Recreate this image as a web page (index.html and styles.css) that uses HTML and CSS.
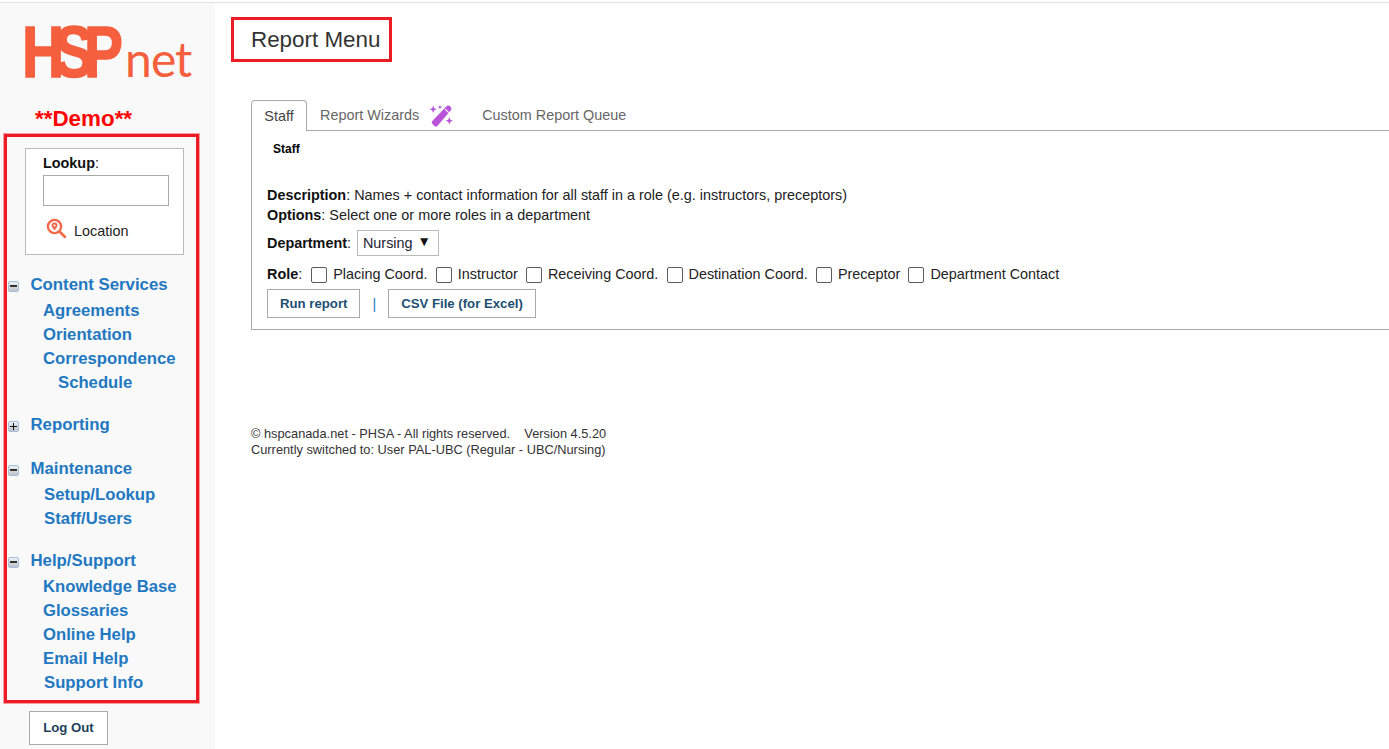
FILE: index.html
```html
<!DOCTYPE html>
<html lang="en">
<head>
<meta charset="utf-8">
<title>Report Menu</title>
<link rel="stylesheet" href="styles.css">
</head>
<body>
<div class="topline"></div>
<div class="layout">
  <aside class="sidebar">
    <div class="logo"><span class="logo-hsp">HSP</span><span class="logo-net">net</span></div>
    <div class="demo">**Demo**</div>
    <div class="navbox">
      <div class="lookup">
        <label class="lookup-label"><b>Lookup</b>:</label>
        <input class="lookup-input" type="text">
        <div class="lookup-loc">
          <svg class="loc-icon" viewBox="0 0 20 20" width="20" height="20"><circle cx="8.5" cy="8.5" r="6.6" fill="none" stroke="#f4694a" stroke-width="2.4"/><path d="M8.5 4.6a3 3 0 0 1 3 3c0 2-3 4.6-3 4.6s-3-2.600-3-4.600a3 3 0 0 1 3-3z" fill="#f4694a"/><circle cx="8.500" cy="7.500" r="1.100" fill="#fff"/><path d="M13.500 13.500 19 19" stroke="#f4694a" stroke-width="2.800" stroke-linecap="round"/></svg>
          <span>Location</span>
        </div>
      </div>
      <nav class="nav">
        <section class="group">
          <div class="head"><span class="tog minus"></span><a>Content Services</a></div>
          <a class="item">Agreements</a>
          <a class="item">Orientation</a>
          <a class="item">Correspondence</a>
          <a class="item sub">Schedule</a>
        </section>
        <section class="group closed">
          <div class="head"><span class="tog plus"></span><a>Reporting</a></div>
        </section>
        <section class="group">
          <div class="head"><span class="tog minus"></span><a>Maintenance</a></div>
          <a class="item alt">Setup/Lookup</a>
          <a class="item alt">Staff/Users</a>
        </section>
        <section class="group">
          <div class="head"><span class="tog minus"></span><a>Help/Support</a></div>
          <a class="item">Knowledge Base</a>
          <a class="item">Glossaries</a>
          <a class="item">Online Help</a>
          <a class="item">Email Help</a>
          <a class="item alt">Support Info</a>
        </section>
      </nav>
    </div>
    <button class="logout">Log Out</button>
  </aside>
  <main class="main">
    <h1 class="title">Report Menu</h1>
    <div class="content">
      <div class="tabs">
        <a class="tab active">Staff</a>
        <a class="tab wizards">Report Wizards
          <svg class="wand" viewBox="0 0 24 24" width="25" height="25"><path d="M16.800 3.200a2.400 2.400 0 0 1 3.400 0l.6.6a2.400 2.400 0 0 1 0 3.400L8 22a2 2 0 0 1-2.800 0l-2-2a2 2 0 0 1 0-2.800z" fill="#b953da"/><path d="M15.500 5.800l3.400 3.400" stroke="#fff" stroke-width="1.100"/><path d="M4 2.500l1 2.500 2.500 1-2.500 1-1 2.500-1-2.500-2.500-1 2.500-1zM10.500 2l.6 1.400 1.400.6-1.400.6-.6 1.400-.6-1.400-1.400-.6 1.400-.6zM19.500 13.500l1 2.500 2.500 1-2.500 1-1 2.500-1-2.500-2.500-1 2.500-1z" fill="#b953da"/></svg>
        </a>
        <a class="tab queue">Custom Report Queue</a>
      </div>
      <div class="panel">
        <div class="panel-title">Staff</div>
        <div class="desc"><b>Description</b>: Names + contact information for all staff in a role (e.g. instructors, preceptors)</div>
        <div class="desc"><b>Options</b>: Select one or more roles in a department</div>
        <div class="dept">
          <b>Department</b><span>:</span>
          <span class="select-wrap"><select class="select"><option>Nursing</option></select></span>
        </div>
        <div class="roles">
          <span class="role-label"><b>Role</b>:</span>
          <label class="role"><input type="checkbox">Placing Coord.</label>
          <label class="role"><input type="checkbox">Instructor</label>
          <label class="role"><input type="checkbox">Receiving Coord.</label>
          <label class="role"><input type="checkbox">Destination Coord.</label>
          <label class="role"><input type="checkbox">Preceptor</label>
          <label class="role"><input type="checkbox">Department Contact</label>
        </div>
        <div class="actions">
          <button class="btn">Run report</button>
          <span class="pipe">|</span>
          <button class="btn">CSV File (for Excel)</button>
        </div>
      </div>
      <footer class="footer">
        <div>© hspcanada.net - PHSA - All rights reserved. &nbsp;&nbsp; Version 4.5.20</div>
        <div>Currently switched to: User PAL-UBC (Regular - UBC/Nursing)</div>
      </footer>
    </div>
  </main>
</div>
</body>
</html>
```
FILE: styles.css
```css
* { box-sizing: border-box; }
html, body { margin: 0; height: 100%; }
body {
  font-family: "Liberation Sans", Arial, sans-serif;
  font-size: 14.400px;
  color: #222;
  background: #fff;
  overflow: hidden;
}
.topline { height: 3px; border-bottom: 1px solid #e2e2e2; }
.layout { display: flex; height: 746px; }

.sidebar {
  width: 215px;
  flex: none;
  background: #f9f9f9;
  padding-left: 4px;
}
.logo {
  height: 91px;
  display: flex;
  align-items: baseline;
  padding: 10px 0 0 18px;
  white-space: nowrap;
  color: #f55f3e;
}
.logo-hsp {
  font-size: 73px;
  line-height: 78px;
  font-weight: 700;
  letter-spacing: -12px;
  transform: scaleX(.8);
  transform-origin: left center;
  -webkit-text-stroke: 1.500px #f55f3e;
}
.logo-net {
  font-family: "Lato", sans-serif;
  font-weight: 400;
  font-size: 48px;
  line-height: 78px;
  letter-spacing: -1px;
  margin-left: -11px;
}
.demo {
  color: #f00;
  font-weight: 700;
  font-size: 22.400px;
  line-height: 26px;
  padding-left: 31px;
  margin-top: 12px;
}
.navbox {
  width: 195px;
  height: 569px;
  margin-top: 2px;
  border: 3px solid #ed1c24;
  box-shadow: 0 0 0 1px rgba(237, 28, 36, .4);
  padding: 11px 12px 0 0;
  overflow: hidden;
}
.lookup {
  margin-left: 18px;
  height: 107px;
  background: #fff;
  border: 1px solid #bbb;
  padding: 6px 14px 0 17px;
}
.lookup-label { display: block; line-height: 16px; color: #111; }
.lookup-input {
  display: block;
  width: 126px;
  height: 31px;
  margin-top: 4px;
  border: 1px solid #aaa;
  background: #fff;
}
.lookup-loc {
  display: flex;
  align-items: center;
  margin: 17px 0 0 3px;
  color: #222;
}
.loc-icon { margin-right: 8px; margin-top: -6px; }

.nav { margin-top: 18px; }
.group { margin-bottom: 18px; color: #1f78c1; }
.group.closed { margin-bottom: 20px; }
.head {
  display: flex;
  align-items: center;
  height: 24px;
  font-size: 16.800px;
  font-weight: 700;
  margin-bottom: 2px;
}
.group.closed .head { margin-bottom: 0; }
.tog {
  position: relative;
  width: 11px;
  height: 11px;
  margin: 2px 11.500px 0 1px;
  flex: none;
  border: 1px solid #a4c0dc;
  border-radius: 2px;
  background: linear-gradient(#eef0f2, #bfc4c9);
}
.tog::before {
  content: "";
  position: absolute;
  left: 1px; right: 1px; top: 3px;
  height: 2px;
  background: #333;
}
.tog.plus::before { left: 1px; right: 1px; top: 4px; height: 1px; background: #111; }
.tog.plus::after {
  content: "";
  position: absolute;
  top: 1px; bottom: 1px; left: 4px;
  width: 1px;
  background: #111;
}
.item {
  display: block;
  height: 24px;
  line-height: 24px;
  font-size: 16.700px;
  font-weight: 700;
  padding-left: 36px;
}
.item.alt { padding-left: 37px; }
.item.sub { padding-left: 51px; }

.logout {
  display: block;
  width: 79px;
  height: 34px;
  margin: 8px 0 0 25px;
  background: #fff;
  border: 1px solid #aaa;
  font: 700 13.200px "Liberation Sans", Arial, sans-serif;
  color: #1d3f5c;
  padding: 0 0 2px;
}

.main { flex: 1; min-width: 0; padding: 14px 0 0 16px; }
.title {
  display: inline-block;
  margin: 0;
  width: 161px;
  height: 45px;
  border: 3px solid #ed1c24;
  padding-left: 17px;
  font-size: 22.400px;
  font-weight: 400;
  line-height: 39px;
  color: #333;
}
.content { padding: 38px 0 0 20px; }
.tabs {
  display: flex;
  height: 31px;
  position: relative;
  z-index: 1;
}
.tab {
  display: flex;
  align-items: center;
  height: 30px;
  color: #666;
  white-space: nowrap;
}
.tab.active {
  width: 56px;
  height: 31px;
  justify-content: center;
  color: #444;
  background: #fff;
  border: 1px solid #aaa;
  border-bottom: 0;
  border-radius: 4px 4px 0 0;
}
.wizards { margin-left: 13px; }
.wand { margin-left: 10px; }
.queue { margin-left: 28px; }

.panel {
  margin-top: -1px;
  height: 200px;
  border: 1px solid #aaa;
  border-right: 0;
  padding-left: 15px;
  color: #222;
}
.panel-title {
  font-size: 12px;
  font-weight: 700;
  line-height: 16px;
  color: #000;
  padding: 10px 0 0 6px;
  height: 54px;
}
.desc { line-height: 20px; }
.desc b, .dept b, .role-label b { color: #111; }
.dept {
  display: flex;
  align-items: center;
  height: 26px;
  margin-top: 5px;
}
.select-wrap { position: relative; margin-left: 6px; }
.select-wrap::after {
  content: "▼";
  position: absolute;
  right: 8px;
  top: 4px;
  font-size: 13.500px;
  color: #111;
  pointer-events: none;
}
.select {
  appearance: none;
  display: block;
  width: 82px;
  height: 26px;
  border: 1px solid #bbb;
  border-radius: 0;
  background: #fff;
  padding: 0 0 0 5px;
  font: 14.400px "Liberation Sans", Arial, sans-serif;
  color: #223;
}
.roles {
  display: flex;
  align-items: center;
  height: 20px;
  margin-top: 8px;
  white-space: nowrap;
}
.role-label { margin-right: 9px; }
.role { display: flex; align-items: center; margin-right: 8.200px; }
.role input {
  appearance: none;
  width: 16px;
  height: 16px;
  margin: 1px 6px 0 0;
  background: #fff;
  border: 1.500px solid #5c5c60;
  border-radius: 2px;
}
.actions {
  display: flex;
  align-items: center;
  margin-top: 5px;
}
.btn {
  height: 29px;
  padding: 0 12px;
  background: #fff;
  border: 1px solid #aaa;
  font: 700 13.200px "Liberation Sans", Arial, sans-serif;
  color: #1d4f73;
}
.pipe { margin: 0 12px; color: #1f78c1; }
.footer {
  margin-top: 96px;
  font-size: 12.800px;
  line-height: 15.500px;
  color: #333;
}
```
